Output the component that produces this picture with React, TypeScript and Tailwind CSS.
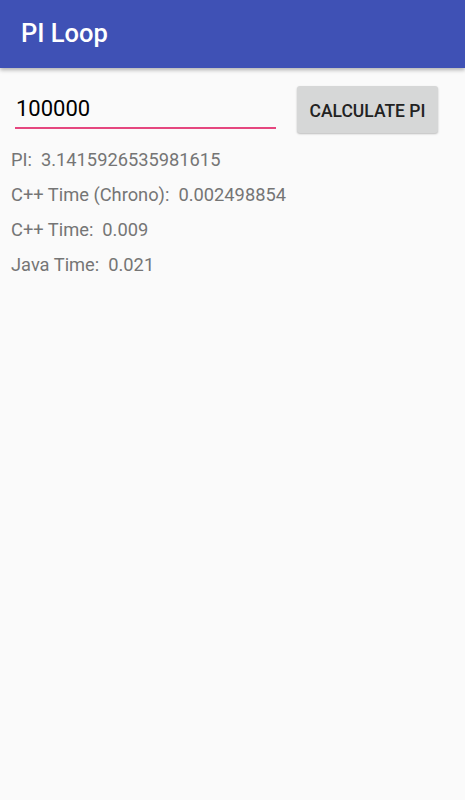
import React from "react";

export default function App() {
  const rows: [string, string][] = [
    ["PI:", "3.1415926535981615"],
    ["C++ Time (Chrono):", "0.002498854"],
    ["C++ Time:", "0.009"],
    ["Java Time:", "0.021"],
  ];
  return (
    <div
      className="w-[465px] h-[800px] bg-[#fafafa] flex flex-col overflow-hidden"
      style={{ fontFamily: "Roboto, 'Noto Sans', sans-serif" }}
    >
      <div className="h-[68px] bg-[#3f51b5] flex items-center pl-[21px] shadow-[0_2px_4px_rgba(0,0,0,0.3)] relative z-10">
        <span className="text-white text-[25.5px] font-medium leading-none">PI Loop</span>
      </div>
      <div className="flex items-start pt-[18px] pl-[15px] pr-[27px]">
        <div className="w-[261px] flex flex-col">
          <div className="h-[38px] flex items-end pl-[1px] text-[22px] text-black leading-none pb-[4px]">
            100000
          </div>
          <div className="h-[2px] bg-[#e5467f] mt-[3px]" />
        </div>
        <div className="ml-auto w-[141px] h-[47px] pt-[3px] bg-[#d6d7d7] rounded-[3px] shadow-[0_1px_2px_rgba(0,0,0,0.25)] flex items-center justify-center text-[17.5px] font-medium text-[#222]">
          CALCULATE PI
        </div>
      </div>
      <div className="flex flex-col pl-[11px] pt-[10px]">
        {rows.map(([k, v]) => (
          <div key={k} className="h-[35px] flex items-center text-[18.3px] text-[#757575] leading-none">
            <span>{k}</span>
            <span className="ml-[9px]">{v}</span>
          </div>
        ))}
      </div>
    </div>
  );
}
